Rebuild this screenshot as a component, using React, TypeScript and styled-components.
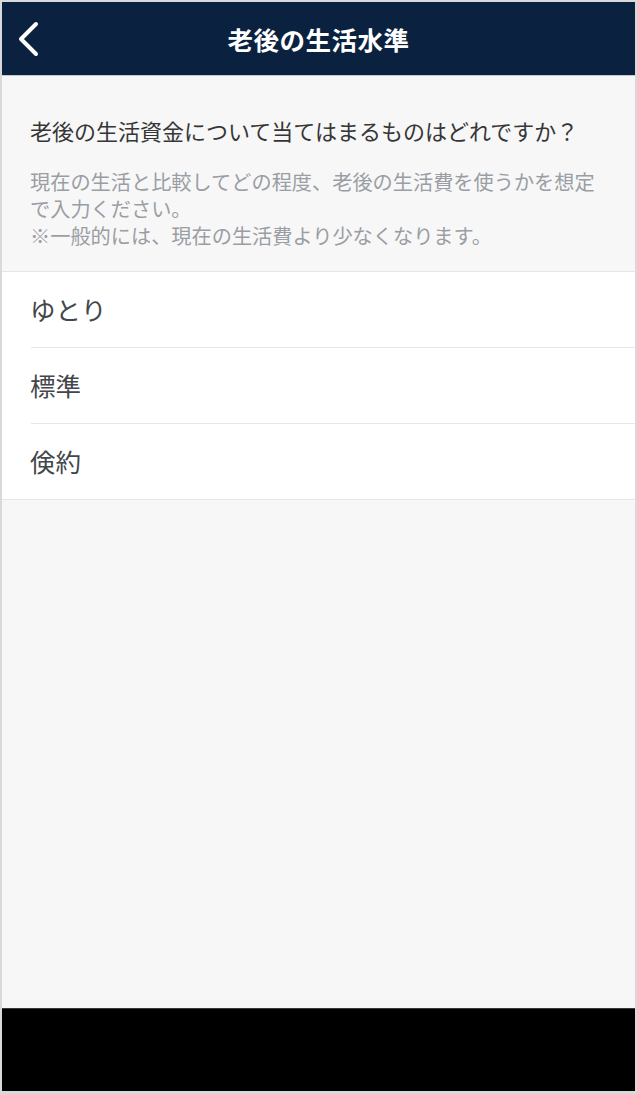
import React from "react";
import styled, { createGlobalStyle } from "styled-components";

const GlobalStyle = createGlobalStyle`
  html, body {
    margin: 0;
    padding: 0;
    background: #d9d9d9;
  }
  * {
    box-sizing: border-box;
  }
`;

const Frame = styled.div`
  display: flex;
  flex-direction: column;
  height: 1089px;
  margin: 2px 2px 3px 2px;
  background: #f7f7f7;
  font-family: "Noto Sans CJK JP", "Noto Sans", sans-serif;
`;

const NavBar = styled.header`
  display: grid;
  grid-template-columns: 60px 1fr 60px;
  align-items: center;
  height: 74px;
  background: #0a2240;
  border-bottom: 1px solid #c6cacf;
`;

const BackButton = styled.button`
  display: flex;
  align-items: center;
  justify-content: flex-start;
  padding: 0 0 0 14px;
  height: 100%;
  border: none;
  background: transparent;
  cursor: pointer;
`;

const Title = styled.h1`
  margin: 0;
  text-align: center;
  color: #ffffff;
  font-size: 25.5px;
  font-weight: 700;
  letter-spacing: 0.5px;
`;

const Intro = styled.section`
  padding: 39px 28px 22px 28px;
`;

const Question = styled.p`
  margin: 0 0 23px;
  font-size: 22px;
  line-height: 30px;
  color: #363636;
`;

const Note = styled.p`
  margin: 0;
  font-size: 20.2px;
  line-height: 27px;
  color: #9a9ea4;
`;

const OptionList = styled.ul`
  margin: 0;
  padding: 0;
  list-style: none;
  background: #ffffff;
  border-top: 1px solid #e6e6e6;
  border-bottom: 1px solid #e6e6e6;
`;

const Option = styled.li<{ $last?: boolean }>`
  display: flex;
  align-items: center;
  height: ${(p) => (p.$last ? "75px" : "76px")};
  margin-left: 29px;
  padding-bottom: 2px;
  border-bottom: ${(p) => (p.$last ? "none" : "1px solid #e6e6e6")};
  font-size: 25.5px;
  color: #43464a;
  text-indent: -1px;
  cursor: pointer;
`;

const Spacer = styled.div`
  flex: 1;
`;

const HomeBar = styled.footer`
  height: 83px;
  background: #000000;
  border-top: 1px solid #3a3a3a;
`;

const ChevronLeft = () => (
  <svg width="26" height="36" viewBox="0 0 26 36" fill="none">
    <polyline
      points="20,3 5,18 20,33"
      stroke="#ffffff"
      strokeWidth="4"
      strokeLinecap="round"
      strokeLinejoin="round"
    />
  </svg>
);

const options = ["ゆとり", "標準", "倹約"];

const App = () => {
  return (
    <>
      <GlobalStyle />
      <Frame>
        <NavBar>
          <BackButton aria-label="戻る">
            <ChevronLeft />
          </BackButton>
          <Title>老後の生活水準</Title>
          <div />
        </NavBar>
        <Intro>
          <Question>老後の生活資金について当てはまるものはどれですか？</Question>
          <Note>
            現在の生活と比較してどの程度、老後の生活費を使うかを想定で入力ください。
            <br />
            ※一般的には、現在の生活費より少なくなります。
          </Note>
        </Intro>
        <OptionList>
          {options.map((label, i) => (
            <Option key={label} $last={i === options.length - 1}>
              {label}
            </Option>
          ))}
        </OptionList>
        <Spacer />
        <HomeBar />
      </Frame>
    </>
  );
};

export default App;
